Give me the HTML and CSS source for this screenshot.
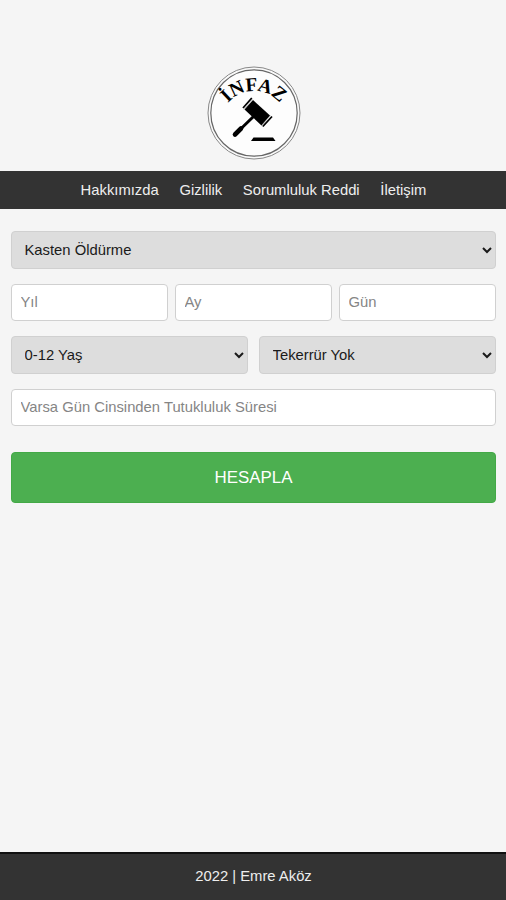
FILE: index.html
```html
<!DOCTYPE html>
<html lang="tr">
<head>
<meta charset="utf-8">
<meta name="viewport" content="width=device-width, initial-scale=1">
<title>İnfaz</title>
<link rel="stylesheet" href="styles.css">
</head>
<body>
<header class="brand">
  <svg class="logo" viewBox="0 0 94 94" role="img" aria-label="İnfaz">
    <circle cx="47" cy="47" r="46" fill="#fafafa" stroke="#888" stroke-width="1"/>
    <circle cx="47" cy="47" r="43.2" fill="#fdfdfd" stroke="#666" stroke-width="1.2"/>
    <path id="arc" d="M13 59A34 34 0 0 1 81 59" fill="none"/>
    <text class="logo-text" text-anchor="middle"><textPath href="#arc" startOffset="50%">İNFAZ</textPath></text>
    <path d="M46.500 50.500L28 68.500" stroke="#000" stroke-width="3" stroke-linecap="round"/>
    <path d="M34 62.500L28 68.500" stroke="#000" stroke-width="4.6" stroke-linecap="round"/>
    <path d="M46 34L63 49.500L54.500 59.500L37.500 43.500Z"/>
    <path d="M44.800 32L36 42M65 50.500L55.800 60.500" stroke="#000" stroke-width="1.8"/>
    <path d="M45.600 33.500L37 43.300M63.500 49.500L54.500 59.500" stroke="#999" stroke-width="0.6"/>
    <path d="M46.500 71.500H66L68.500 75H44Z"/>
  </svg>
</header>
<nav class="nav">
  <a href="#">Hakkımızda</a>
  <a href="#">Gizlilik</a>
  <a href="#">Sorumluluk Reddi</a>
  <a href="#">İletişim</a>
</nav>
<main class="form">
  <select class="select"><option>Kasten Öldürme</option></select>
  <div class="row thirds">
    <input class="input" placeholder="Yıl">
    <input class="input" placeholder="Ay">
    <input class="input" placeholder="Gün">
  </div>
  <div class="row halves">
    <select class="select"><option>0-12 Yaş</option></select>
    <select class="select"><option>Tekerrür Yok</option></select>
  </div>
  <input class="input" placeholder="Varsa Gün Cinsinden Tutukluluk Süresi">
  <button class="submit" type="button">HESAPLA</button>
</main>
<footer class="footer">2022 | Emre Aköz</footer>
</body>
</html>
```
FILE: styles.css
```css
* { box-sizing: border-box; }
body {
  margin: 0;
  height: 900px;
  display: flex;
  flex-direction: column;
  background: #f5f5f5;
  font: 14.8px "Liberation Sans", Arial, sans-serif;
}
.brand {
  height: 171px;
  padding-top: 66px;
  display: flex;
  justify-content: center;
  align-items: flex-start;
  padding-left: 2px;
}
.logo { width: 94px; height: 94px; }
.logo-text { font: bold 19.5px "Liberation Serif", serif; }
.nav {
  height: 38px;
  background: #333;
  display: flex;
  justify-content: center;
  align-items: center;
  gap: 20.7px;
  padding-left: 1px;
}
.nav a { color: #eee; text-decoration: none; }
.form {
  flex: 1;
  padding: 22px 10px 0 11px;
  display: flex;
  flex-direction: column;
  gap: 15px;
}
.row { display: grid; }
.thirds { grid-template-columns: repeat(3, minmax(0, 1fr)); gap: 7px; }
.halves { grid-template-columns: repeat(2, minmax(0, 1fr)); gap: 11px; }
.select, .input {
  width: 100%;
  border: 1px solid #d0d0d0;
  border-radius: 4px;
  font: inherit;
}
.select { height: 38px; padding: 0 0 0 8.5px; background-color: #ddd; color: #1a1a1a; }
.input { height: 37px; padding: 0 8.5px 1px; background: #fff; }
.input::placeholder { color: #858585; }
.submit {
  height: 51px;
  margin-top: 11px;
  border: 1px solid #43a947;
  border-radius: 4px;
  background: #4caf50;
  color: #fff;
  font: 16.9px "Liberation Sans", Arial, sans-serif;
}
.footer {
  height: 48px;
  padding: 0 0 3px 1px;
  border-top: 2px solid #111;
  background: #333;
  color: #eee;
  display: flex;
  justify-content: center;
  align-items: center;
}
```
